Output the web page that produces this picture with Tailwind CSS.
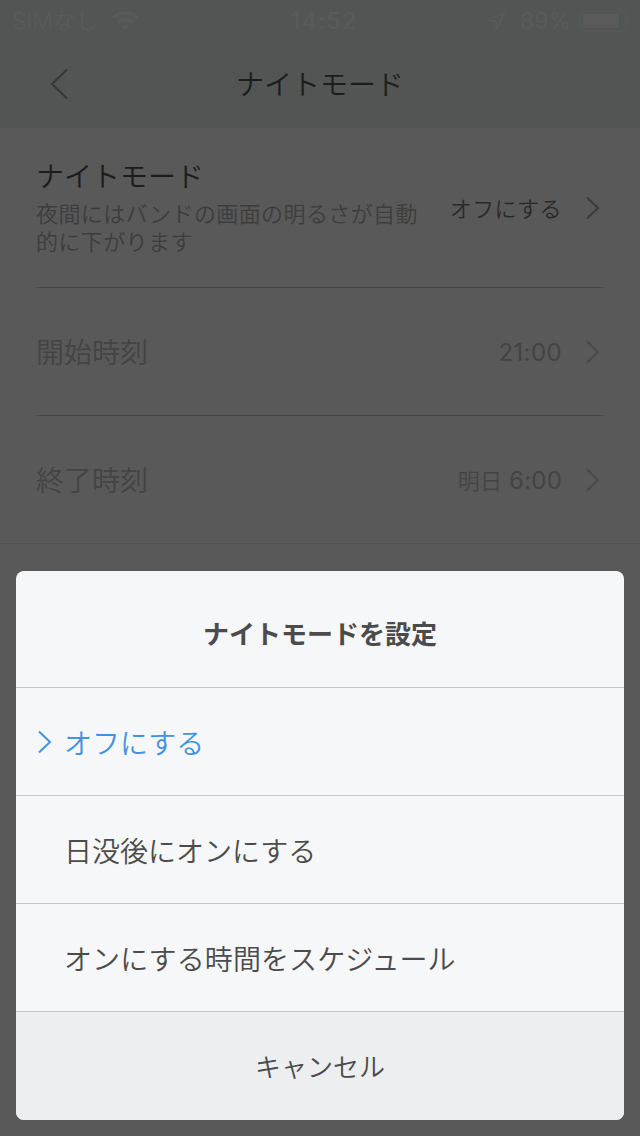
<!DOCTYPE html>
<html lang="ja">
<head>
    <meta charset="UTF-8">
    <meta name="viewport" content="width=device-width, initial-scale=1.0">
    <title>ナイトモード</title>
    <script src="https://cdn.jsdelivr.net/npm/@tailwindcss/browser@4"></script>
</head>
<body class="relative h-[1136px] w-[640px] overflow-hidden bg-[#595959] font-['Inter','Noto_Sans_CJK_JP',sans-serif] font-[350] text-[#1c1c1c]">
    <header class="h-32 bg-[#525553]">
        <!-- Status bar -->
        <div class="grid h-10 grid-cols-3 items-center pt-px text-[23px] leading-10 text-[#5a5a5a]">
            <div class="flex items-center gap-[13px] pl-3">
                <span class="tracking-[-0.2px]">SIMなし</span>
                <svg class="h-5 w-7" viewBox="0 0 28 20" fill="none" stroke="currentColor" stroke-width="3.8">
                    <path d="M1.5 7a18 18 0 0 1 25 0M6 11.8a11.4 11.4 0 0 1 16 0" />
                    <path d="M14 19.5l-4.3-4.3a6.2 6.2 0 0 1 8.6 0z" fill="currentColor" stroke="none" />
                </svg>
            </div>
            <div class="pl-2 text-center font-medium tracking-[1.3px]">14:52</div>
            <div class="flex items-center justify-end pr-[9px]">
                <svg class="mr-[14px] h-5 w-5" viewBox="0 0 20 20" fill="none" stroke="currentColor" stroke-width="1.8" stroke-linejoin="round">
                    <path d="M18.5 1.5L1.5 9.2l8.2 1.2.8 8z" />
                </svg>
                <span class="mr-2 font-normal">89%</span>
                <svg class="h-[22px] w-[52px]" viewBox="0 0 52 22">
                    <rect x="1" y="1" width="46" height="20" rx="5" fill="none" stroke="#565756" stroke-width="2" />
                    <rect x="4" y="4" width="36" height="14" rx="1" fill="currentColor" />
                    <path d="M49 7.5c3 1 3 6 0 7z" fill="#565756" />
                </svg>
            </div>
        </div>
        <!-- Navigation bar -->
        <div class="grid h-[88px] grid-cols-[80px_1fr_80px] items-center">
            <svg class="ml-[50px] h-[30px] w-[18px]" viewBox="0 0 18 30" fill="none" stroke="#363736" stroke-width="2">
                <path d="M17 .5L2 15l15 14.5" />
            </svg>
            <h1 class="pt-0.5 text-center text-[28px] leading-[86px]">ナイトモード</h1>
        </div>
    </header>

    <!-- Settings list -->
    <main class="border-b border-[#4f4f4f]">
        <div class="mx-9 flex h-40 items-center border-b border-[#454545]">
            <div class="w-[400px]">
                <h2 class="text-[28px] leading-9">ナイトモード</h2>
                <p class="pt-[5px] text-[22px] leading-7 tracking-[0.4px] text-[#3d3d3d]">夜間にはバンドの画面の明るさが自動<br>的に下がります</p>
            </div>
            <span class="ml-auto pt-1 text-[22px] tracking-[0.4px] text-[#292929]">オフにする</span>
            <svg class="ml-6 mr-1 h-6 w-[14px]" viewBox="0 0 14 24" fill="none" stroke="#3b3b3b" stroke-width="2">
                <path d="M1 1.5L12 12 1 22.5" />
            </svg>
        </div>
        <div class="mx-9 flex h-32 items-center border-b border-[#454545] text-[#444]">
            <span class="pt-0.5 text-[28px]">開始時刻</span>
            <span class="ml-auto pt-[3px] text-[24px] font-normal tracking-[0.4px]">21:00</span>
            <svg class="ml-6 mr-1 h-6 w-[14px]" viewBox="0 0 14 24" fill="none" stroke="#4a4a4a" stroke-width="2">
                <path d="M1 1.5L12 12 1 22.5" />
            </svg>
        </div>
        <div class="mx-9 flex h-[127px] items-center text-[#444]">
            <span class="pt-0.5 text-[28px]">終了時刻</span>
            <span class="ml-auto pt-[3px] text-[24px] font-normal tracking-[0.2px]"><span class="text-[22px] font-[350]">明日</span> 6:00</span>
            <svg class="ml-6 mr-1 h-6 w-[14px]" viewBox="0 0 14 24" fill="none" stroke="#4a4a4a" stroke-width="2">
                <path d="M1 1.5L12 12 1 22.5" />
            </svg>
        </div>
    </main>

    <!-- Action sheet -->
    <div class="absolute inset-x-4 bottom-4 overflow-hidden rounded-lg bg-[#f6f7f9] text-[#4a4b4a]">
        <h3 class="flex h-[117px] items-center justify-center border-b border-[#c5c6c8] pt-2.5 text-[26px] font-bold">ナイトモードを設定</h3>
        <ul class="text-[28px]">
            <li class="flex h-27 items-center border-b border-[#c5c6c8] pl-[22px] text-[#3f92e5]">
                <svg class="mr-3 h-6 w-[14px]" viewBox="0 0 14 24" fill="none" stroke="currentColor" stroke-width="2">
                    <path d="M1 1.5L12 12 1 22.5" />
                </svg>
                <span class="pt-1">オフにする</span>
            </li>
            <li class="flex h-27 items-center border-b border-[#c5c6c8] pl-12 pt-1">日没後にオンにする</li>
            <li class="flex h-27 items-center border-b border-[#c5c6c8] pl-12 pt-1 tracking-[0.1px]">オンにする時間をスケジュール</li>
        </ul>
        <button class="block h-27 w-full bg-[#edeef0] pt-0.5 text-[26px]">キャンセル</button>
    </div>
</body>
</html>
